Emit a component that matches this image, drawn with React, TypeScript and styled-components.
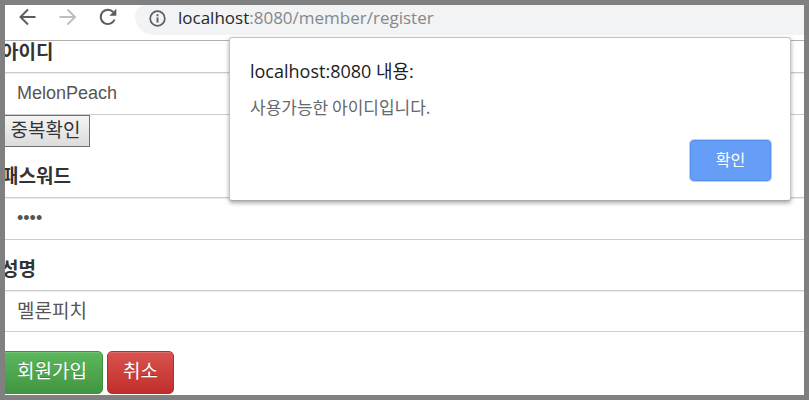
import React from "react";
import styled, { createGlobalStyle } from "styled-components";

const korean = `"Noto Sans CJK KR", sans-serif`;

const GlobalStyle = createGlobalStyle`
  *, *::before, *::after { box-sizing: border-box; }
  body { margin: 0; background: #808080; }
  button, input { font-family: inherit; margin: 0; }
`;

const Frame = styled.div`
  position: relative;
  min-height: 100vh;
  border: 5px solid #808080;
  background: #fff;
  overflow: hidden;
  font-family: ${korean};
`;

const Toolbar = styled.header`
  display: flex;
  align-items: flex-start;
  height: 36px;
  padding-left: 11px;
  border-bottom: 1px solid #b0b0b0;
`;

const NavButton = styled.button<{ $dim?: boolean }>`
  display: flex;
  justify-content: center;
  width: 24px;
  height: 24px;
  margin-right: 16px;
  padding: 0;
  border: 0;
  background: none;
  color: ${(p) => (p.$dim ? "#bdbfc1" : "#5a5d61")};
`;

const AddressBar = styled.div`
  display: flex;
  flex: 1;
  align-items: center;
  gap: 12px;
  height: 30px;
  margin-left: -1px;
  padding: 0 0 4px 14px;
  border-radius: 12px 0 0 20px;
  background: #f1f3f4;
`;

const Address = styled.div`
  font: 17px/24px "Open Sans", ${korean};
  color: #85888b;
`;

const Host = styled.span`
  color: #26282b;
`;

const Form = styled.form`
  margin-left: -4px;
`;

const Field = styled.div`
  margin-bottom: 14px;
`;

const Label = styled.label`
  display: block;
  padding-bottom: 8px;
  font-size: 19px;
  font-weight: 700;
  line-height: 28px;
  color: #333;
`;

const FirstField = styled(Field)`
  ${Label} { line-height: 20px; padding-bottom: 11px; }
`;

const TextInput = styled.input<{ $korean?: boolean }>`
  display: block;
  width: 100%;
  height: ${(p) => (p.$korean ? "42px" : "43px")};
  padding: ${(p) => (p.$korean ? "0 16px 4px" : "0 16px")};
  border: solid #ccc;
  border-width: 1px 0;
  border-radius: 0;
  outline: 0;
  background: #fff;
  box-shadow: inset 0 1px 1px rgba(0, 0, 0, 0.08);
  font-family: ${(p) => (p.$korean ? korean : `"Liberation Sans", ${korean}`)};
  font-size: ${(p) => (p.$korean ? "19px" : "18px")};
  color: #555;
`;

const CheckButton = styled.button`
  display: block;
  width: 89px;
  height: 32px;
  padding: 0 0 4px;
  border: 1px solid #707070;
  background: linear-gradient(#f5f5f5, #dcdcdc);
  font-size: 19px;
  line-height: 26px;
  color: #333;
`;

const Actions = styled.div`
  display: flex;
  gap: 4px;
  padding-top: 5px;
`;

const ActionButton = styled.button<{ $tone: "green" | "red" }>`
  height: 43px;
  padding: 0 15px 6px;
  border: 1px solid ${(p) => (p.$tone === "green" ? "#3e8f3e" : "#b92c28")};
  border-radius: 5px;
  background: ${(p) =>
    p.$tone === "green"
      ? "linear-gradient(#5cb85c, #419641)"
      : "linear-gradient(#d9534f, #c12e2a)"};
  box-shadow: inset 0 1px 0 rgba(255, 255, 255, 0.15);
  font-size: 19px;
  line-height: 28px;
  color: #fff;
  text-shadow: 0 -1px 0 rgba(0, 0, 0, 0.2);
`;

const Dialog = styled.div`
  position: absolute;
  top: 32px;
  right: 13px;
  display: flex;
  flex-direction: column;
  width: 562px;
  max-width: 90%;
  padding: 19px 19px 19px 20px;
  border: 1px solid #c4c5c6;
  border-bottom-color: #aaa;
  border-radius: 3px;
  background: #fff;
  box-shadow: 0 2px 4px rgba(0, 0, 0, 0.35);
`;

const DialogTitle = styled.h1`
  margin: 0 0 10px;
  font: 18px/28px "Open Sans", ${korean};
  color: #202124;
`;

const DialogText = styled.p`
  margin: 0 0 21px;
  font-size: 17px;
  line-height: 24px;
  color: #65686c;
`;

const ConfirmButton = styled.button`
  align-self: flex-end;
  width: 81px;
  height: 41px;
  padding: 0 0 4px;
  border: 1px solid #5490f0;
  border-radius: 4px;
  background: #669df6;
  box-shadow: 0 0 0 1px #b9d2fb;
  font-size: 16px;
  color: #fff;
`;

const BackIcon = () => (
  <svg width="24" height="24" viewBox="0 0 24 24" fill="none" stroke="currentColor" strokeWidth="2">
    <path d="M19.5 12H5M12 4.5 4.5 12l7.5 7.5" />
  </svg>
);

const ForwardIcon = () => (
  <svg width="24" height="24" viewBox="0 0 24 24" fill="none" stroke="currentColor" strokeWidth="2">
    <path d="M3.5 12H19M11.5 4.5 19 12l-7.5 7.5" />
  </svg>
);

const ReloadIcon = () => (
  <svg width="24" height="24" viewBox="0 0 24 24">
    <path d="M18.6 14.5A7.2 7.2 0 1 1 17.2 7" fill="none" stroke="currentColor" strokeWidth="2" />
    <path d="M20.3 3.8v7h-7z" fill="currentColor" />
  </svg>
);

const InfoIcon = () => (
  <svg width="17" height="17" viewBox="0 0 17 17" fill="none" stroke="#5a5d61">
    <circle cx="8.5" cy="8.5" r="7.3" strokeWidth="1.7" />
    <path d="M8.5 7.5v5M8.5 4.3v2" strokeWidth="1.9" />
  </svg>
);

export default function App() {
  return (
    <>
      <GlobalStyle />
      <Frame>
        <Toolbar>
          <NavButton aria-label="뒤로"><BackIcon /></NavButton>
          <NavButton aria-label="앞으로" $dim><ForwardIcon /></NavButton>
          <NavButton aria-label="새로고침"><ReloadIcon /></NavButton>
          <AddressBar>
            <InfoIcon />
            <Address><Host>localhost</Host>:8080/member/register</Address>
          </AddressBar>
        </Toolbar>
        <Form onSubmit={(e) => e.preventDefault()}>
          <FirstField>
            <Label htmlFor="userId">아이디</Label>
            <TextInput id="userId" type="text" defaultValue="MelonPeach" />
            <CheckButton type="button">중복확인</CheckButton>
          </FirstField>
          <Field>
            <Label htmlFor="userPass">패스워드</Label>
            <TextInput id="userPass" type="password" defaultValue="1234" />
          </Field>
          <Field>
            <Label htmlFor="userName">성명</Label>
            <TextInput id="userName" type="text" defaultValue="멜론피치" $korean />
          </Field>
          <Actions>
            <ActionButton type="submit" $tone="green">회원가입</ActionButton>
            <ActionButton type="button" $tone="red">취소</ActionButton>
          </Actions>
        </Form>
        <Dialog role="alertdialog" aria-labelledby="dialogTitle" aria-describedby="dialogText">
          <DialogTitle id="dialogTitle">localhost:8080 내용:</DialogTitle>
          <DialogText id="dialogText">사용가능한 아이디입니다.</DialogText>
          <ConfirmButton type="button">확인</ConfirmButton>
        </Dialog>
      </Frame>
    </>
  );
}
